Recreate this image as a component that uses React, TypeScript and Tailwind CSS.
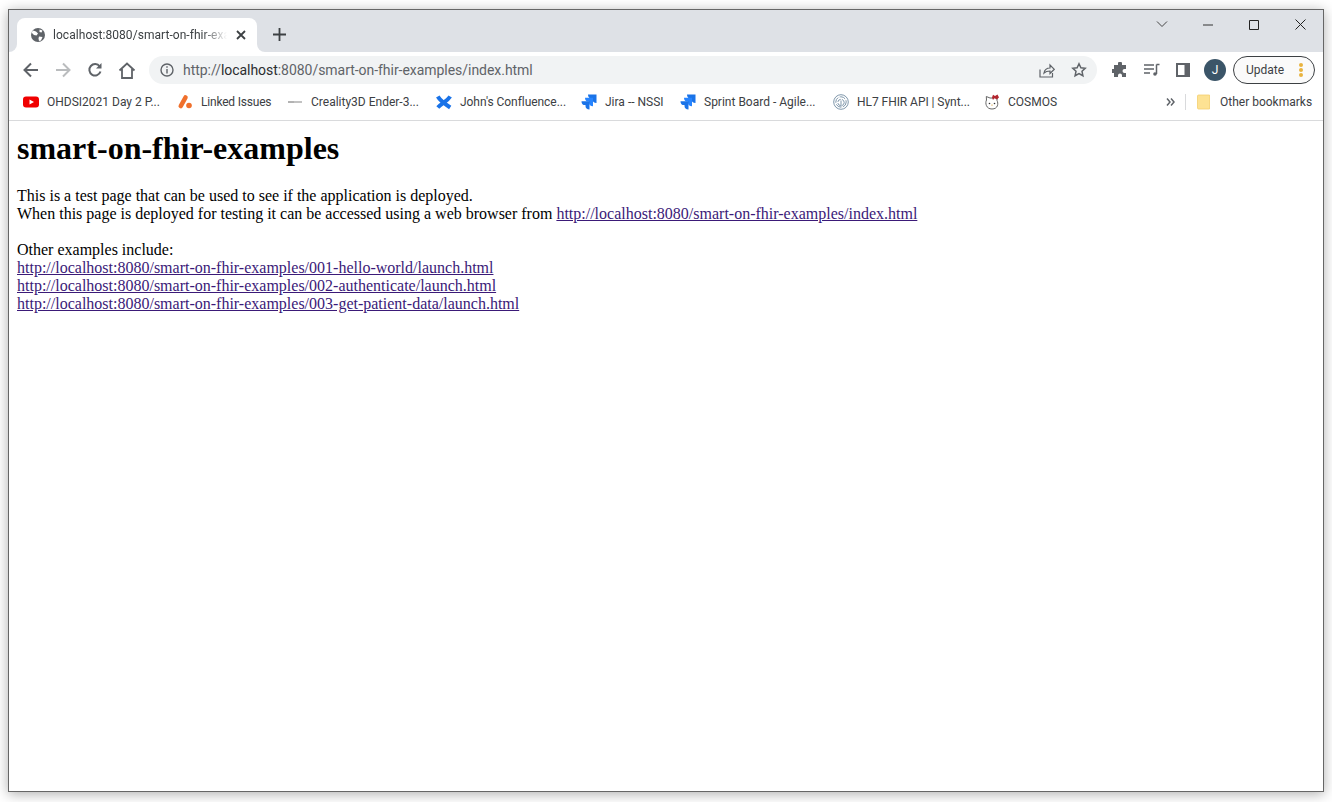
import React from 'react'

const uiFont = "font-['Roboto','Liberation_Sans',sans-serif]"

function TabFlare({ side }: { side: 'left' | 'right' }) {
  return (
    <span className={side === 'left' ? 'absolute bottom-0 -left-2 w-2 h-2 bg-white' : 'absolute bottom-0 -right-2 w-2 h-2 bg-white'}>
      <span className={side === 'left' ? 'block w-2 h-2 bg-[#dee1e6] rounded-br-lg' : 'block w-2 h-2 bg-[#dee1e6] rounded-bl-lg'} />
    </span>
  )
}

function Globe() {
  return (
    <svg width="16" height="16" viewBox="0 0 16 16">
      <circle cx="8" cy="8" r="7" fill="#5f6368" />
      <path d="M3 3.500l3 1 2 2-1.500 2-2.500-.5-2.500-2.500zM9.500 2.500l3 1-1 2-2-.5zM9 9.500l3.500.5-1.500 3.500-2 .5-.5-2.500z" fill="#fff" />
    </svg>
  )
}

function Back({ color }: { color: string }) {
  return (
    <svg width="18" height="18" viewBox="0 0 18 18" fill="none" stroke={color} strokeWidth="2">
      <path d="M16 9H3M9 2.500L2.500 9 9 15.500" />
    </svg>
  )
}

function Youtube() {
  return (
    <svg width="16" height="16" viewBox="0 0 16 16">
      <rect x="0" y="2.500" width="16" height="11" rx="3" fill="#f00000" />
      <path d="M6.500 5.500v5L11 8z" fill="#fff" />
    </svg>
  )
}

function LinkedIssues() {
  return (
    <svg width="16" height="16" viewBox="0 0 16 16">
      <path d="M8.500 3.500L3.800 12" stroke="#f0702c" strokeWidth="4.600" strokeLinecap="round" />
      <circle cx="12" cy="11.500" r="2.800" fill="#f0702c" />
    </svg>
  )
}

function Creality() {
  return (
    <svg width="16" height="16" viewBox="0 0 16 16">
      <path d="M1 8h6" stroke="#666" strokeWidth="1" />
      <path d="M7 8h8" stroke="#999" strokeWidth="1.200" />
    </svg>
  )
}

function Confluence() {
  return (
    <svg width="16" height="16" viewBox="0 0 16 16" fill="none" stroke="#1a73e8" strokeWidth="4">
      <path d="M1.800 2.500C4 6.500 9 10 14.200 13.500" />
      <path d="M14.200 2.500C11 7.500 6 9 1.800 13.500" />
    </svg>
  )
}

function Jira() {
  return (
    <svg width="16" height="16" viewBox="0 0 16 16">
      <path d="M7 .5h8.500V9C13 9 11.500 7.500 11.500 5.500V4.200H9.500C8 4.200 7 2.500 7 .5z" fill="#1a73e8" />
      <path d="M4 3.800h8v8.400c-2.500 0-4-1.500-4-3.500V7.500H6.500C5 7.500 4 5.800 4 3.800z" fill="#2684ff" />
      <path d="M.5 7.200h8v8.300c-2.500 0-4-1.500-4-3.500V10.900H3C1.500 10.900.5 9.200.5 7.200z" fill="#1a73e8" />
    </svg>
  )
}

function Fingerprint() {
  return (
    <svg width="16" height="16" viewBox="0 0 16 16" fill="none" stroke="#7f97ab" strokeWidth="1">
      <circle cx="8" cy="8" r="7.300" />
      <circle cx="8" cy="8" r="5.200" strokeDasharray="6 1.500" />
      <circle cx="8" cy="8.500" r="3.200" strokeDasharray="4 1.200" />
      <path d="M8 6.500v6" />
    </svg>
  )
}

function Kitty() {
  return (
    <svg width="16" height="16" viewBox="0 0 16 16">
      <path d="M2.500 6L2.300 2.500 6 4h4l3.300-1.500-.3 4c1.600 3 1 8.500-5 8.500S1 9 2.500 6z" fill="#fff" stroke="#666" strokeWidth="1" />
      <circle cx="5.500" cy="9.500" r="0.800" fill="#333" />
      <circle cx="10.500" cy="9.500" r="0.800" fill="#333" />
      <ellipse cx="8" cy="11" rx="0.800" ry="0.500" fill="#d8a23a" />
      <path d="M8 3.500L9 .8l2 1.200L13.500.5 15 3.500l-2.500 2-2-1.500L9 6z" fill="#b3262f" />
    </svg>
  )
}

const bookmarks: { icon: React.ReactNode; label: string; w: string }[] = [
  { icon: <Youtube />, label: 'OHDSI2021 Day 2 P...', w: 'w-[114px]' },
  { icon: <LinkedIssues />, label: 'Linked Issues', w: 'w-[70px] tracking-[-0.2px]' },
  { icon: <Creality />, label: 'Creality3D Ender-3...', w: 'w-[109px]' },
  { icon: <Confluence />, label: "John's Confluence...", w: 'w-[105px] tracking-[-0.05px]' },
  { icon: <Jira />, label: 'Jira -- NSSI', w: 'w-[59px]' },
  { icon: <Jira />, label: 'Sprint Board - Agile...', w: 'w-[113px]' },
  { icon: <Fingerprint />, label: 'HL7 FHIR API | Synt...', w: 'w-[111px] tracking-[-0.05px]' },
  { icon: <Kitty />, label: 'COSMOS', w: 'w-[49px]' },
]

const links = [
  'http://localhost:8080/smart-on-fhir-examples/001-hello-world/launch.html',
  'http://localhost:8080/smart-on-fhir-examples/002-authenticate/launch.html',
  'http://localhost:8080/smart-on-fhir-examples/003-get-patient-data/launch.html',
]

export default function App() {
  return (
    <div className="w-[1332px] h-[802px] bg-white pl-2 pr-2 pt-[9px] pb-[10px] overflow-hidden">
      <div className="h-full flex flex-col border border-[#666] bg-white shadow-[0_2px_12px_rgba(0,0,0,0.32)]">
        {/* tab strip */}
        <div className="h-[42px] shrink-0 bg-[#dee1e6] flex items-end pl-2 relative">
          <div className="relative w-[240px] h-[34px] bg-white rounded-t-lg flex items-center pl-[13px]">
            <TabFlare side="left" />
            <TabFlare side="right" />
            <Globe />
            <span className={`${uiFont} ml-[7px] w-[174px] whitespace-nowrap text-[12px] text-[#3c4043] tracking-[0.05px] [mask-image:linear-gradient(to_right,black_86%,transparent)]`}>
              localhost:8080/smart-on-fhir-exa
            </span>
            <svg className="ml-[9px]" width="10" height="10" viewBox="0 0 10 10" stroke="#3c4043" strokeWidth="1.800">
              <path d="M1 1l8 8M9 1l-8 8" />
            </svg>
          </div>
          <svg className="ml-4 mb-[11px]" width="13" height="13" viewBox="0 0 13 13" stroke="#3c4043" strokeWidth="1.800">
            <path d="M6.500 0v13M0 6.500h13" />
          </svg>
          <div className="ml-auto self-start flex items-center h-[28px] pt-[1px] pr-[17px] text-[#333]">
            <svg width="12" height="7" viewBox="0 0 12 7" fill="none" stroke="#444" strokeWidth="1"><path d="M1 .5l5 5 5-5" /></svg>
            <svg className="ml-[35px]" width="10" height="2" viewBox="0 0 10 2" stroke="#333" strokeWidth="1"><path d="M0 1h10" /></svg>
            <svg className="ml-[36px]" width="10" height="10" viewBox="0 0 10 10" fill="none" stroke="#222" strokeWidth="1"><path d="M.5.5h9v9h-9z" /></svg>
            <svg className="ml-[36px]" width="11" height="11" viewBox="0 0 11 11" fill="none" stroke="#222" strokeWidth="1"><path d="M.5.500l10 10M10.500.500l-10 10" /></svg>
          </div>
        </div>

        {/* toolbar */}
        <div className="h-[36px] shrink-0 bg-white flex items-start pt-1 pl-[13px] pr-[8px]">
          <div className="h-[28px] flex items-center">
            <Back color="#5f6368" />
            <div className="ml-[14px] -scale-x-100"><Back color="#babcbe" /></div>
            <svg className="ml-[15px]" width="16" height="16" viewBox="0 0 16 16" fill="none" stroke="#5f6368" strokeWidth="2">
              <path d="M13.500 9.500a5.700 5.700 0 1 1-.8-5" />
              <path d="M14.500 1v5.500H9" fill="#5f6368" stroke="none" />
            </svg>
            <svg className="ml-[15px]" width="18" height="17" viewBox="0 0 18 17" fill="none" stroke="#5f6368" strokeWidth="1.800">
              <path d="M1.500 8.500L9 1.500l7.500 7M4 7v9h10V7" />
            </svg>
          </div>
          <div className="ml-[13px] w-[948px] h-[28px] bg-[#f1f3f4] rounded-full flex items-center pl-[11px] pr-[10px]">
            <svg width="14" height="14" viewBox="0 0 14 14" fill="none" stroke="#5f6368" strokeWidth="1.400">
              <circle cx="7" cy="7" r="6" />
              <path d="M7 6v4.500M7 3.300v1.500" />
            </svg>
            <span className={`${uiFont} ml-[9px] text-[14px] tracking-[-0.04px] whitespace-nowrap text-[#5f6368]`}>
              http://<span className="text-[#2b2d30]">localhost</span>:8080/smart-on-fhir-examples/index.html
            </span>
            <svg className="ml-auto" width="16" height="15" viewBox="0 0 16 15" fill="none" stroke="#5f6368" strokeWidth="1.200">
              <path d="M1 6.500v7.500h12.500v-4M5 10c.5-3 3-5 6-5V2l4.300 4.300L11 10.500V8c-2.500 0-4.500.5-6 2z" />
            </svg>
            <svg className="ml-4" width="16" height="16" viewBox="0 0 16 16" fill="none" stroke="#5f6368" strokeWidth="1.500">
              <path d="M8 1.800l1.900 4 4.300.5-3.200 3 .9 4.400L8 11.500l-3.900 2.200.9-4.400-3.200-3 4.300-.5z" />
            </svg>
          </div>
          <div className="h-[28px] flex items-center ml-[15px]">
            <svg width="16" height="16" viewBox="0 0 16 16" fill="#5f6368">
              <path d="M6 1.500a2 2 0 0 1 4 0V3h4v4h-1.500a2 2 0 0 0 0 4H14v4h-4v-1.500a2 2 0 0 0-4 0V15H2v-4H.500a2 2 0 0 1 0-4H2V3h4z" />
            </svg>
            <svg className="ml-4" width="16" height="14" viewBox="0 0 16 14" fill="none" stroke="#5f6368" strokeWidth="1.500">
              <path d="M0 2h10M0 6h10M0 10h6" />
              <path d="M12.500 1.500h3M12.500 1.500v9.500" />
              <circle cx="11" cy="11" r="1.800" fill="#5f6368" stroke="none" />
            </svg>
            <svg className="ml-4" width="14" height="14" viewBox="0 0 14 14">
              <path d="M0 0h14v14H0z" fill="#5f6368" />
              <path d="M2 2h6.500v10H2z" fill="#fff" />
            </svg>
            <div className={`${uiFont} ml-[14px] w-[22px] h-[22px] rounded-full bg-[#3b5568] text-white text-[12px] flex items-center justify-center`}>J</div>
            <div className="ml-[7px] w-[82px] h-[28px] rounded-full border border-[#3c4043] bg-[#fafafa] flex items-center pl-3">
              <span className={`${uiFont} text-[12px] text-[#3c4043]`}>Update</span>
              <span className="ml-auto mr-[11px] flex flex-col gap-px">
                <span className="w-1 h-1 rounded-full bg-[#e8b33f]" />
                <span className="w-1 h-1 rounded-full bg-[#e8b33f]" />
                <span className="w-1 h-1 rounded-full bg-[#e8b33f]" />
              </span>
            </div>
          </div>
        </div>

        {/* bookmarks bar */}
        <div className={`${uiFont} h-[33px] shrink-0 bg-white border-b border-[#d9dadc] flex items-center pb-[5px] pl-[14px] pr-[11px] text-[12px] text-[#3c4043]`}>
          <div className="flex items-center gap-4">
            {bookmarks.map((b) => (
              <div key={b.label} className="flex items-center gap-2">
                {b.icon}
                <span className={`${b.w} whitespace-nowrap`}>{b.label}</span>
              </div>
            ))}
          </div>
          <svg className="ml-auto" width="9" height="8" viewBox="0 0 9 8" fill="none" stroke="#5f6368" strokeWidth="1.500">
            <path d="M1 .5L4 4 1 7.500M5 .5L8 4 5 7.500" />
          </svg>
          <span className="ml-[10px] w-px h-4 bg-[#d9dadc]" />
          <svg className="ml-[11px]" width="14" height="16" viewBox="0 0 14 16">
            <path d="M1.500 1h11v14h-11a1 1 0 0 1-1-1V2a1 1 0 0 1 1-1z" fill="#fde293" stroke="#f4cf6f" strokeWidth="0.800" />
          </svg>
          <span className="ml-[9px] whitespace-nowrap w-[92px]">Other bookmarks</span>
        </div>

        {/* page */}
        <div className="flex-1 bg-white pl-2 pt-[9px] text-black font-['Liberation_Serif',serif] text-[16px] leading-[18px]">
          <h1 className="text-[32px] leading-[37px] font-bold">smart-on-fhir-examples</h1>
          <p className="mt-[20px]">This is a test page that can be used to see if the application is deployed.</p>
          <p>
            When this page is deployed for testing it can be accessed using a web browser from{' '}
            <a href="#" className="underline text-[#3b1a78]">http://localhost:8080/smart-on-fhir-examples/index.html</a>
          </p>
          <p className="mt-[18px]">Other examples include:</p>
          {links.map((l) => (
            <div key={l}>
              <a href="#" className="underline text-[#3b1a78]">{l}</a>
            </div>
          ))}
        </div>
      </div>
    </div>
  )
}
